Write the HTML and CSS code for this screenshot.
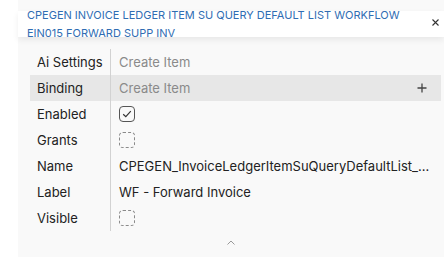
FILE: index.html
```html
<!DOCTYPE html>
<html lang="en">
<head>
    <meta charset="UTF-8">
    <title>Workflow item</title>
    <link rel="stylesheet" href="styles.css">
</head>
<body>
    <div class="gutter"></div>
    <div class="panel">
        <div class="header">
            <div class="title">CPEGEN INVOICE LEDGER ITEM SU QUERY DEFAULT LIST WORKFLOW EIN015 FORWARD SUPP INV</div>
            <span class="close">
                <svg width="7" height="7" viewBox="0 0 7 7"><path d="M0.5 0.5L6.5 6.5M6.5 0.5L0.5 6.5" stroke="#333" stroke-width="1.1"/></svg>
            </span>
        </div>

        <div class="props">
            <div class="row">
                <div class="key">Ai Settings</div>
                <div class="val placeholder">Create Item</div>
            </div>
            <div class="row active">
                <div class="key">Binding</div>
                <div class="val placeholder">Create Item</div>
                <span class="add">
                    <svg width="10" height="10" viewBox="0 0 10 10"><path d="M5 0.5V9.5M0.5 5H9.5" stroke="#444" stroke-width="1.3"/></svg>
                </span>
            </div>
            <div class="row">
                <div class="key">Enabled</div>
                <div class="val">
                    <span class="check on">
                        <svg width="12" height="12" viewBox="0 0 12 12"><path d="M2.2 6.2L4.8 8.6L9.8 3.2" fill="none" stroke="#333" stroke-width="1.2"/></svg>
                    </span>
                </div>
            </div>
            <div class="row">
                <div class="key">Grants</div>
                <div class="val"><span class="check"></span></div>
            </div>
            <div class="row">
                <div class="key">Name</div>
                <div class="val"><span class="text">CPEGEN_InvoiceLedgerItemSuQueryDefaultList_...</span></div>
            </div>
            <div class="row">
                <div class="key">Label</div>
                <div class="val">WF - Forward Invoice</div>
            </div>
            <div class="row">
                <div class="key">Visible</div>
                <div class="val"><span class="check"></span></div>
            </div>
        </div>

        <div class="collapse">
            <svg width="8" height="5" viewBox="0 0 8 5"><path d="M0.5 4.5L4 1L7.5 4.5" fill="none" stroke="#999" stroke-width="1"/></svg>
        </div>
    </div>
</body>
</html>
```

FILE: styles.css
```css
* {
    box-sizing: border-box;
}
body {
    margin: 0;
    display: flex;
    height: 257px;
    overflow: hidden;
    font-family: Inter, "Liberation Sans", sans-serif;
    background-color: #fff;
}
.gutter {
    width: 18px;
    flex-shrink: 0;
}
.panel {
    flex-grow: 1;
    min-width: 0;
    background-color: #f9f9f9;
    padding-top: 11px;
}
.header {
    display: flex;
    height: 26px;
    overflow: hidden;
    background-color: #fff;
    padding-left: 9px;
    box-shadow: 0 3px 6px rgba(0, 0, 0, .07);
}
.title {
    flex: 1;
    min-width: 0;
    margin-top: -5px;
    font-size: 11px;
    line-height: 18px;
    color: #2f6db3;
}
.close {
    flex-shrink: 0;
    margin: 8px 5px 0 4px;
    display: flex;
}
.props {
    margin: 12px 3px 0 12px;
}
.row {
    display: flex;
    align-items: center;
    height: 26px;
    position: relative;
    font-size: 13px;
    color: #222;
}
.row.active {
    background-color: #e7e7e7;
}
.key {
    width: 81px;
    flex-shrink: 0;
    height: 100%;
    display: flex;
    align-items: center;
    padding-left: 7px;
    border-right: 1px solid #d2d2d2;
}
.val {
    flex: 1;
    min-width: 0;
    padding: 0 8px 0 8px;
    white-space: nowrap;
    display: flex;
    align-items: center;
}
.val .text {
    overflow: hidden;
    text-overflow: ellipsis;
}
.val.placeholder {
    color: #8a8a8a;
}
.add {
    position: absolute;
    right: 14px;
    top: 8px;
    display: flex;
}
.check {
    width: 16px;
    height: 16px;
    border: 1px dashed #8a8a8a;
    border-radius: 4px;
    display: flex;
    align-items: center;
    justify-content: center;
}
.check.on {
    border: 1px solid #555;
}
.collapse {
    display: flex;
    justify-content: center;
    margin-top: 9px;
}
```
